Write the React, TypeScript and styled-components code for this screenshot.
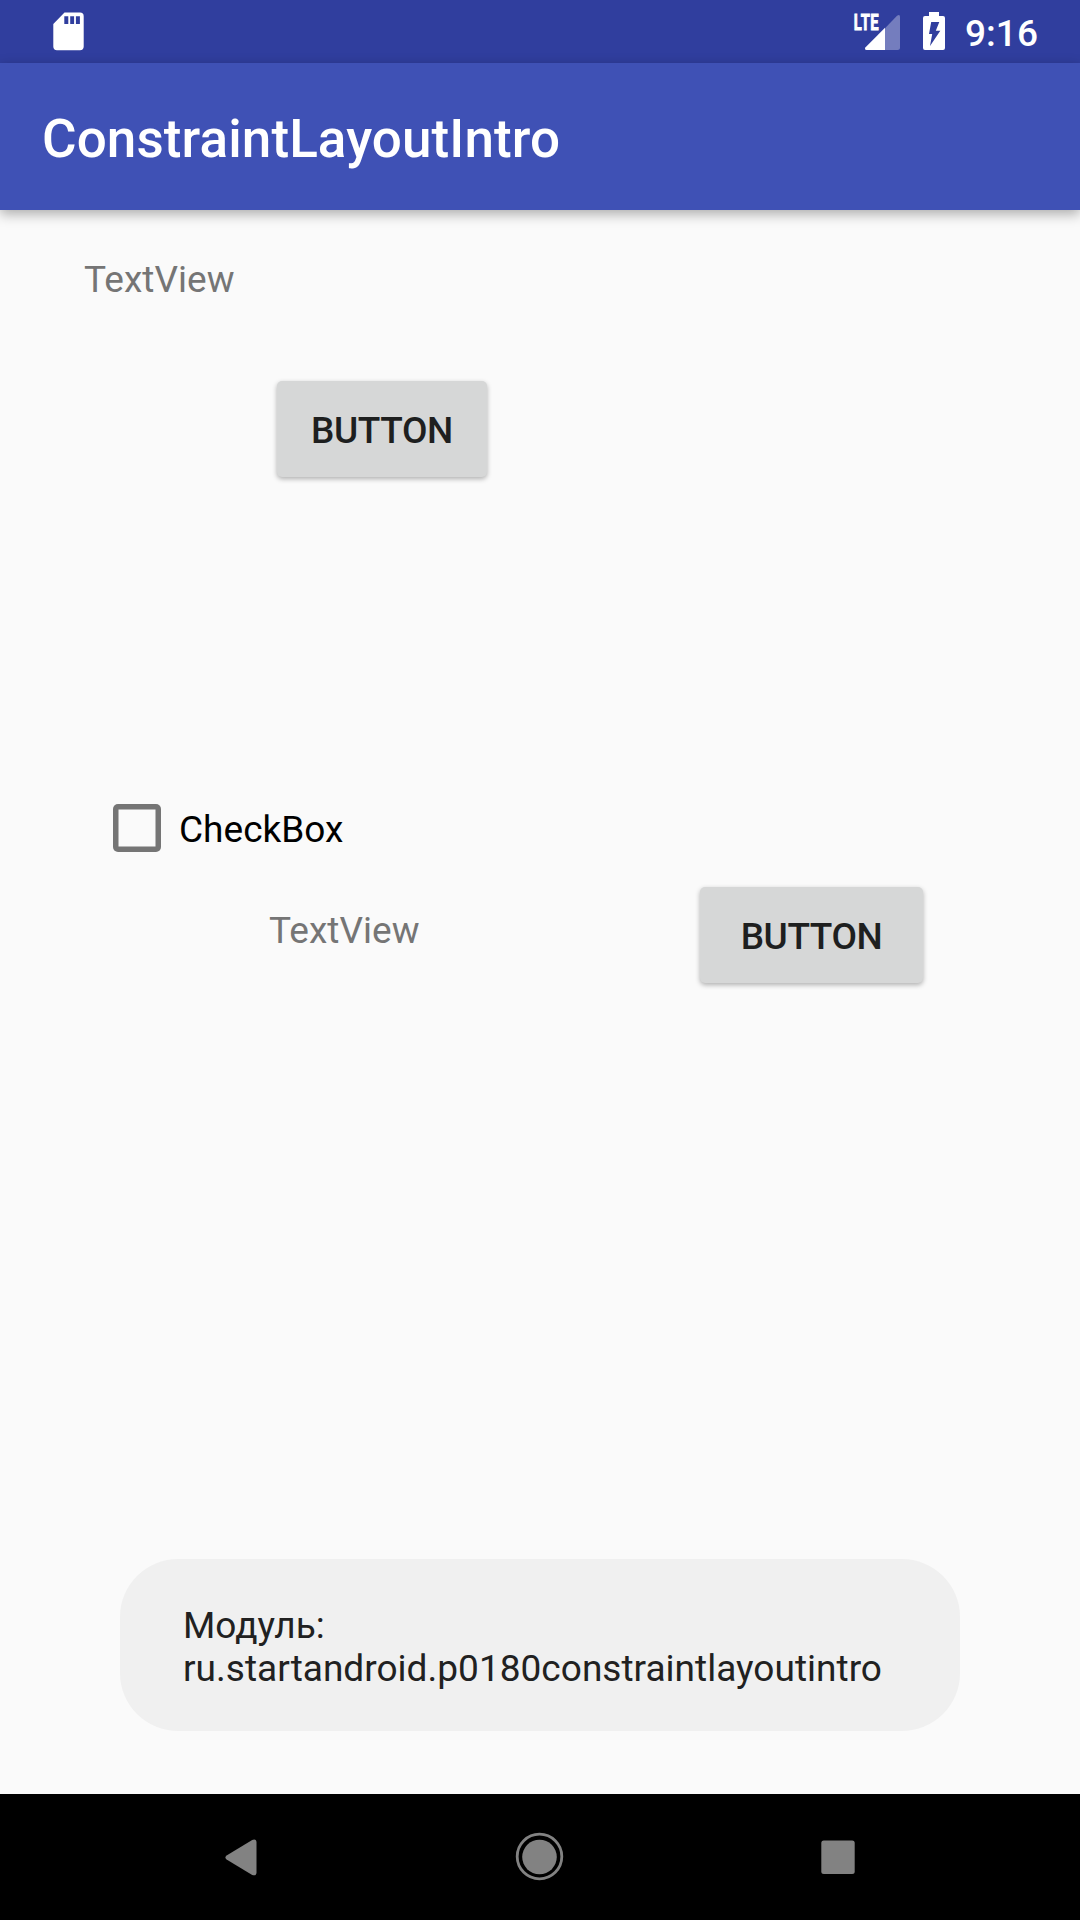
import React from "react";
import styled, { createGlobalStyle } from "styled-components";

const GlobalStyle = createGlobalStyle`
  *, *::before, *::after { box-sizing: border-box; }
  html, body { margin: 0; padding: 0; background: #fafafa; }
  button { margin: 0; border: 0; padding: 0; font: inherit; }
`;

const Screen = styled.div`
  display: flex;
  flex-direction: column;
  width: 1080px;
  height: 1920px;
  overflow: hidden;
  background: #fafafa;
  font-family: Roboto, "Noto Sans", sans-serif;
  font-size: 37px;
  letter-spacing: 0.025px;
  line-height: 43px;
`;

const StatusBar = styled.header`
  display: flex;
  flex: none;
  align-items: flex-start;
  justify-content: space-between;
  height: 63px;
  padding: 0 42px 0 53px;
  background: #303e9e;
  color: #fff;
`;

const StatusGroup = styled.div`
  display: flex;
  align-items: flex-start;
`;

const StatusIcon = styled.svg<{ $gap?: number }>`
  display: block;
  flex: none;
  margin-right: ${(p) => p.$gap ?? 0}px;
`;

const Clock = styled.span`
  width: 73px;
  padding-top: 12px;
  font-size: 37px;
  font-weight: 500;
`;

const AppBar = styled.div`
  display: flex;
  flex: none;
  align-items: center;
  height: 147px;
  padding: 4px 42px 0;
  background: #3f51b5;
  box-shadow: 0 4px 12px rgba(0, 0, 0, 0.32);
`;

const Title = styled.h1`
  margin: 0;
  color: #fff;
  font-size: 53px;
  font-weight: 500;
  letter-spacing: 0.1px;
  line-height: 62px;
`;

const Content = styled.main`
  display: flex;
  flex: 1;
  flex-direction: column;
  align-items: flex-start;
  padding: 48px 0 63px;
`;

const TextView = styled.span<{ $left: number; $top?: number }>`
  margin: ${(p) => p.$top ?? 0}px 0 0 ${(p) => p.$left}px;
  color: #757575;
`;

const RaisedButton = styled.button<{ $width: number; $left: number; $top?: number }>`
  width: ${(p) => p.$width}px;
  height: 96px;
  margin: ${(p) => p.$top ?? 0}px 0 0 ${(p) => p.$left}px;
  padding-top: 2px;
  border-radius: 5px;
  background: #d6d7d7;
  box-shadow: 0 2px 5px rgba(0, 0, 0, 0.3);
  color: #1e1f1f;
  font-weight: 500;
  letter-spacing: -0.4px;
  text-transform: uppercase;
`;

const CheckRow = styled.label`
  display: flex;
  align-items: flex-start;
  height: 48px;
  margin: 327px 0 0 113px;
  color: #000;
`;

const CheckSquare = styled.input`
  appearance: none;
  width: 47.6px;
  height: 47.6px;
  margin: 0 18.2px 0 0.2px;
  border-radius: 5px;
  box-shadow: inset 0 0 0 5.5px #757575;
`;

const CheckLabel = styled.span`
  padding-top: 4px;
`;

const Row = styled.div`
  display: flex;
  align-items: flex-start;
  margin-top: 35px;
`;

const Toast = styled.div`
  align-self: center;
  width: 840px;
  height: 172px;
  margin-top: auto;
  padding: 45px 60px 0 63px;
  border-radius: 58px;
  background: #f0f0f0;
  color: #212121;
  white-space: pre-line;
`;

const NavBar = styled.nav`
  display: flex;
  flex: none;
  align-items: center;
  justify-content: center;
  gap: 235px;
  height: 126px;
  padding-right: 1px;
  background: #000;
`;

const NavButton = styled.button`
  display: flex;
  width: 63px;
  height: 63px;
  background: transparent;
  color: #828282;
`;

function SdCardIcon() {
  return (
    <StatusIcon width="32" height="63" viewBox="53 0 32 63">
      <path
        fill="#fff"
        fillRule="evenodd"
        d="M64.5 12.5H80q3.7 0 3.7 3.7V46.5q0 3.7-3.7 3.7H57q-3.7 0-3.7-3.7V24ZM64.3 16.2V24H68.3V16.2ZM70.2 16.2V24H74.1V16.2ZM75.9 16.2V24H79.9V16.2Z"
      />
    </StatusIcon>
  );
}

function SignalIcon() {
  return (
    <StatusIcon $gap={22} width="48" height="63" viewBox="853 0 48 63">
      <path fill="#fff" fillOpacity=".33" d="M885 28.2 897 15.8Q900 13.5 900 17V47.5Q900 50 897.5 50H885Z" />
      <path fill="#fff" d="M885 27.8V50H866.5Q864 49.5 865.6 47.2Z" />
      <text
        x="853.8"
        y="29.7"
        fill="#fff"
        stroke="#fff"
        strokeWidth=".9"
        fontFamily="Roboto, sans-serif"
        fontSize="22.5"
        fontWeight="700"
        letterSpacing=".8"
        textLength="25.4"
        lengthAdjust="spacingAndGlyphs"
      >
        LTE
      </text>
    </StatusIcon>
  );
}

function BatteryIcon() {
  return (
    <StatusIcon $gap={20} width="22" height="63" viewBox="923 0 22 63">
      <path
        fill="#fff"
        fillRule="evenodd"
        d="M929 12H939V16H943Q945 16 945 18V48Q945 50 943 50H925Q923 50 923 48V18Q923 16 925 16H929ZM931.2 22 929 34H932.2L930 46 940.3 30.8H935.8L939.3 22Z"
      />
    </StatusIcon>
  );
}

export default function App() {
  return (
    <>
      <GlobalStyle />
      <Screen>
        <StatusBar>
          <SdCardIcon />
          <StatusGroup>
            <SignalIcon />
            <BatteryIcon />
            <Clock>9:16</Clock>
          </StatusGroup>
        </StatusBar>
        <AppBar>
          <Title>ConstraintLayoutIntro</Title>
        </AppBar>
        <Content>
          <TextView $left={84}>TextView</TextView>
          <RaisedButton $width={210} $left={277} $top={80}>
            Button
          </RaisedButton>
          <CheckRow>
            <CheckSquare type="checkbox" />
            <CheckLabel>CheckBox</CheckLabel>
          </CheckRow>
          <Row>
            <TextView $left={269} $top={22}>
              TextView
            </TextView>
            <RaisedButton $width={223} $left={280.5}>
              Button
            </RaisedButton>
          </Row>
          <Toast>{"Модуль:\nru.startandroid.p0180constraintlayoutintro"}</Toast>
        </Content>
        <NavBar>
          <NavButton aria-label="Back">
            <svg width="63" height="63" viewBox="210 1825.5 63 63">
              <path
                fill="currentColor"
                d="M226.6 1854.9 252.2 1839.4Q256.5 1838 256.5 1842V1871.7Q256.5 1876 252.2 1874.4L226.6 1859.1Q224.2 1857 226.6 1854.9Z"
              />
            </svg>
          </NavButton>
          <NavButton aria-label="Home">
            <svg width="63" height="63" viewBox="508 1825.5 63 63">
              <circle cx="539.5" cy="1856" r="22.3" fill="none" stroke="currentColor" strokeWidth="2.8" />
              <circle cx="539.5" cy="1856.5" r="17.3" fill="currentColor" />
            </svg>
          </NavButton>
          <NavButton aria-label="Overview">
            <svg width="63" height="63" viewBox="806 1825.5 63 63">
              <rect x="821.3" y="1840" width="33.4" height="33.4" rx="2.5" fill="currentColor" />
            </svg>
          </NavButton>
        </NavBar>
      </Screen>
    </>
  );
}
